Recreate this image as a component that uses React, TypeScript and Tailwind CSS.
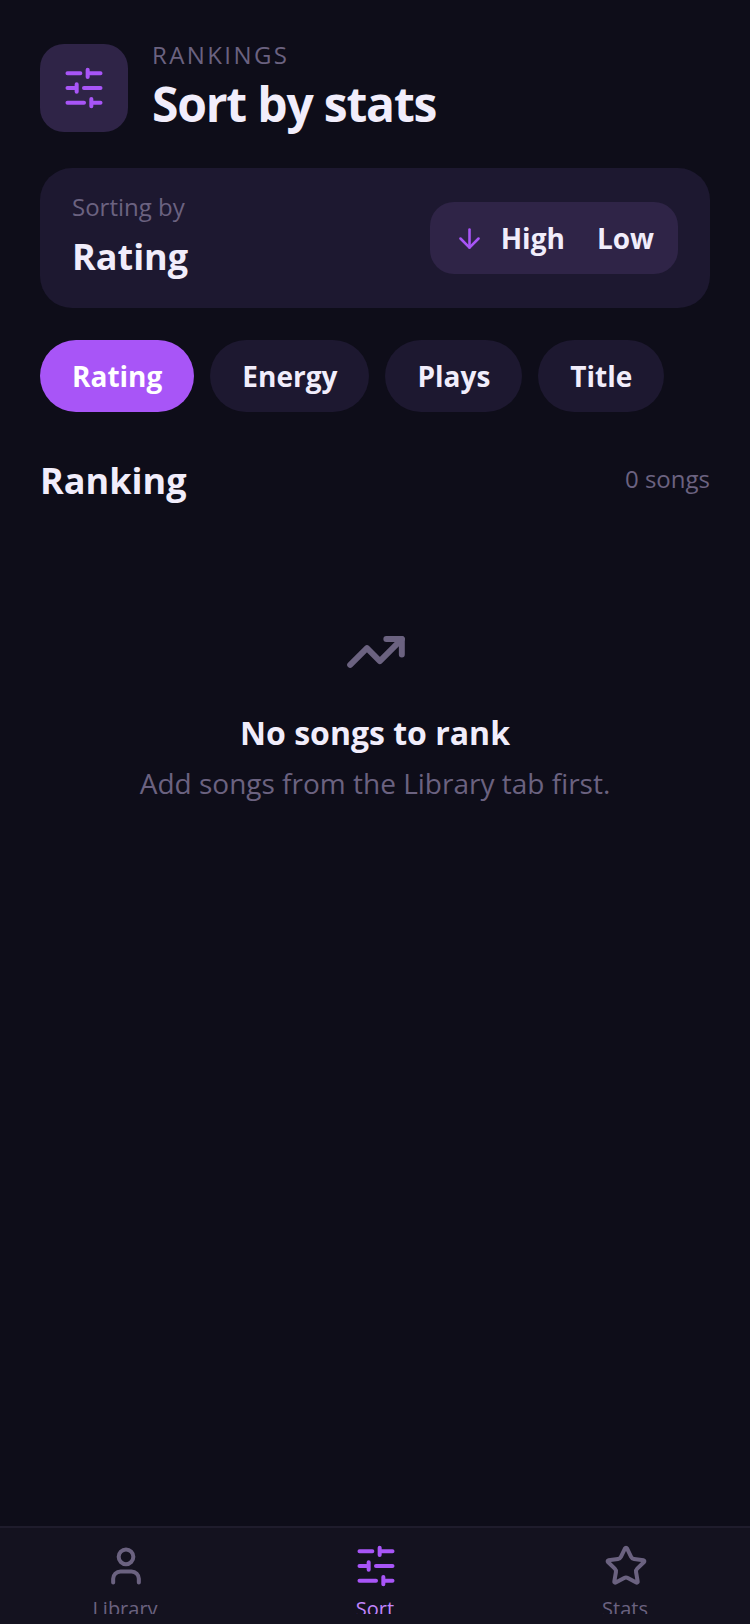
import { ArrowDown, Star, TrendingUp, User } from "lucide-react";

const sortOptions = ["Rating", "Energy", "Plays", "Title"];

function SlidersIcon({ className }: { className?: string }) {
  return (
    <svg
      width={44}
      height={44}
      viewBox="0 0 24 24"
      fill="none"
      stroke="currentColor"
      strokeWidth={2.2}
      strokeLinecap="round"
      strokeLinejoin="round"
      className={className}
    >
      <path d="M21 4h-7M10 4H3M21 12h-9M8 12H3M21 20h-5M12 20H3M14 2v4M8 10v4M16 18v4" />
    </svg>
  );
}

function NavIcon({ name, className }: { name: string; className: string }) {
  if (name === "Sort") return <SlidersIcon className={className} />;
  if (name === "Stats") return <Star size={44} strokeWidth={2.2} className={className} />;
  return <User size={44} strokeWidth={2.2} className={className} />;
}

export default function App() {
  return (
    <div className="h-[1624px] w-[750px] overflow-hidden bg-[#0e0d19] font-['Open_Sans',sans-serif] text-[#f1edfb] flex flex-col">
      <main className="flex-1 px-10 pt-11">
        <header className="flex h-[88px] items-start gap-6">
          <div className="flex h-[88px] w-[88px] items-center justify-center rounded-3xl bg-[#2f2447]">
            <SlidersIcon className="text-[#a855f7]" />
          </div>
          <div className="-mt-[5px]">
            <p className="text-[24px] leading-[32px] tracking-[2.4px] text-[#6b6280]">RANKINGS</p>
            <h1 className="mt-[3px] text-[48px] leading-[60px] font-bold tracking-[-1.2px]">Sort by stats</h1>
          </div>
        </header>

        <section className="mt-9 flex h-[140px] items-center justify-between rounded-[32px] bg-[#1d1830] px-8">
          <div className="-mt-[4px]">
            <p className="text-[24px] leading-[32px] text-[#6b6280]">Sorting by</p>
            <p className="mt-[10px] text-[36px] leading-[48px] font-bold">Rating</p>
          </div>
          <button className="flex h-[72px] items-center gap-4 rounded-3xl bg-[#2f2447] px-6 text-[28px] font-bold">
            <ArrowDown size={31} strokeWidth={2} className="text-[#a855f7]" />
            <span>High</span>
            <span className="ml-4">Low</span>
          </button>
        </section>

        <div className="mt-8 flex gap-4">
          {sortOptions.map((option, i) => (
            <button
              key={option}
              className={`h-[72px] rounded-full px-8 text-[28px] font-bold ${
                i === 0 ? "bg-[#a855f7] text-white" : "bg-[#1d1830] text-[#f1edfb]"
              }`}
            >
              {option}
            </button>
          ))}
        </div>

        <div className="mt-[45px] flex items-center justify-between">
          <h2 className="text-[36px] leading-[48px] font-bold">Ranking</h2>
          <span className="mb-1 text-[24px] text-[#6b6280]">0 songs</span>
        </div>

        <div className="mt-[116px] flex flex-col items-center">
          <TrendingUp size={62} strokeWidth={2.3} className="ml-[2px] text-[#6b6280]" />
          <p className="mt-[28px] text-[32px] leading-[44px] font-bold">No songs to rank</p>
          <p className="mt-[8px] text-[28px] leading-[40px] text-[#6b6280]">Add songs from the Library tab first.</p>
        </div>
      </main>

      <nav className="flex h-[98px] border-t-2 border-[#1f1c2c] bg-[#14121f]">
        {["Library", "Sort", "Stats"].map((label) => {
          const active = label === "Sort";
          return (
            <div key={label} className="flex h-[86px] w-[250px] flex-col items-center overflow-hidden pt-4">
              <NavIcon name={label} className={`ml-[2px] shrink-0 ${active ? "text-[#a855f7]" : "text-[#6b6280]"}`} />
              <span className={`mt-[7px] shrink-0 text-[20px] leading-[28px] ${active ? "text-[#c084fc]" : "text-[#6b6280]"}`}>
                {label}
              </span>
            </div>
          );
        })}
      </nav>
    </div>
  );
}
